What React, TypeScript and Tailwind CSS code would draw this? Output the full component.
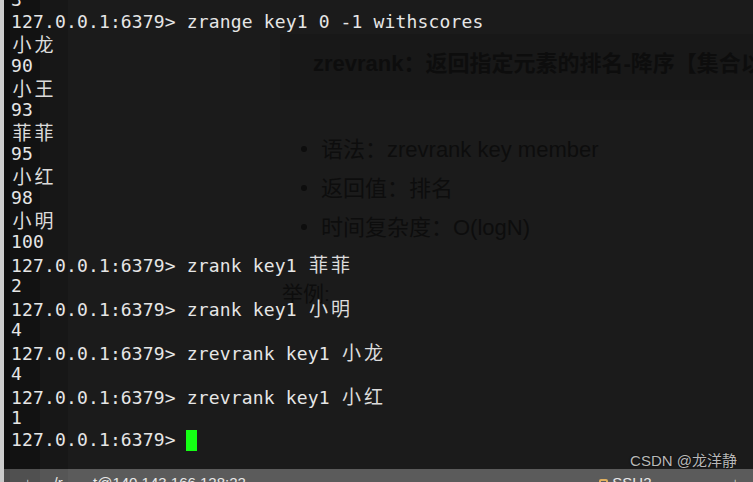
import React from "react";

type Seg = { t: string; cjk?: boolean };

const L = (...segs: (string | Seg)[]): Seg[] =>
  segs.map((s) => (typeof s === "string" ? { t: s } : s));
const C = (t: string): Seg => ({ t, cjk: true });

const P = "127.0.0.1:6379> ";

const lines: Seg[][] = [
  L("3"),
  L(P + "zrange key1 0 -1 withscores"),
  L(C("小龙")),
  L("90"),
  L(C("小王")),
  L("93"),
  L(C("菲菲")),
  L("95"),
  L(C("小红")),
  L("98"),
  L(C("小明")),
  L("100"),
  L(P + "zrank key1 ", C("菲菲")),
  L("2"),
  L(P + "zrank key1 ", C("小明")),
  L("4"),
  L(P + "zrevrank key1 ", C("小龙")),
  L("4"),
  L(P + "zrevrank key1 ", C("小红")),
  L("1"),
];

const mono = "font-['DejaVu_Sans_Mono',monospace]";
const ghost =
  "font-['Liberation_Sans','Noto_Sans_CJK_SC',sans-serif] text-[#0d0d0d]";

const Line: React.FC<{ segs: Seg[] }> = ({ segs }) => (
  <div className="h-[22px] leading-[22px] whitespace-pre">
    {segs.map((s, i) =>
      s.cjk ? (
        s.t.split("").map((ch, j) => (
          <span
            key={`${i}-${j}`}
            className="inline-block w-[22px] text-center font-['Noto_Sans_CJK_SC',sans-serif] text-[19px] text-[#dcdcdc]"
          >
            {ch}
          </span>
        ))
      ) : (
        <span key={i}>{s.t}</span>
      )
    )}
  </div>
);

const App: React.FC = () => {
  return (
    <div className="w-[753px] h-[482px] overflow-hidden flex bg-[#1b1b1b]">
      <div className="w-[4px] shrink-0 bg-[#c9c9c9]" />
      <div className="relative flex-1 flex flex-col">
        {/* faint columns of the window behind */}
        <div className="absolute inset-y-0 left-0 flex">
          <div className="w-[6px] bg-[#0d0d0d]" />
          <div className="w-[30px] bg-[#121212]" />
          <div className="w-[28px] bg-[#171717]" />
        </div>

        {/* document showing through */}
        <div className="absolute left-[276px] top-[34px] right-0 h-[66px] bg-[#181818]" />
        <div className={`absolute left-[309px] top-[47px] text-[22px] font-bold whitespace-nowrap ${ghost}`}>
          zrevrank：返回指定元素的排名-降序【集合以
        </div>
        <ul className={`absolute left-[297px] top-[135px] text-[22px] space-y-[11px] ${ghost}`}>
          {["语法：zrevrank key member", "返回值：排名", "时间复杂度：O(logN)"].map(
            (t) => (
              <li key={t} className="flex items-center h-[28px] whitespace-nowrap">
                <span className="w-[6px] h-[6px] rounded-full bg-[#0d0d0d] mr-[14px]" />
                {t}
              </li>
            )
          )}
        </ul>
        <div className={`absolute left-[278px] top-[278px] text-[21px] ${ghost}`}>
          举例:
        </div>

        {/* terminal */}
        <div
          className={`relative z-10 flex-1 pl-[7px] mt-[-11px] text-[18px] tracking-[0.15px] text-[#e6e6e6] ${mono}`}
        >
          {lines.map((l, i) => (
            <Line key={i} segs={l} />
          ))}
          <div className="h-[22px] leading-[22px] whitespace-pre flex items-center">
            <span>{P}</span>
            <span className="w-[11px] h-[21px] bg-[#14ff14] -ml-[1px]" />
          </div>
        </div>

        <div className="absolute z-20 right-[16px] bottom-[10px] text-[15px] text-[#b8b8b8] font-['Liberation_Sans','Noto_Sans_CJK_SC',sans-serif] [text-shadow:0_0_2px_#000]">
          CSDN @龙洋静
        </div>

        {/* status bar */}
        <div className="relative h-[13px] shrink-0 bg-[#5b5b5b] overflow-hidden">
          <div className="absolute inset-y-0 left-0 flex">
            <div className="w-[6px] bg-[#4a4a4a]" />
            <div className="w-[30px] bg-[#505050]" />
            <div className="w-[28px] bg-[#565656]" />
          </div>
          <div className="relative flex items-start pt-[5px] text-[15px] leading-[18px] text-[#e8e8e8] font-['Liberation_Sans',sans-serif]">
            <span className="ml-[20px]">↓</span>
            <span className="ml-[22px]">/r</span>
            <span className="ml-[22px]">..t@140.143.166.128:22</span>
            <span className="ml-auto flex items-center">
              <span className="w-[9px] h-[9px] rounded-[2px] border-2 border-[#e0b060] mr-[4px]" />
              SSH2
            </span>
            <span className="ml-[80px] mr-[14px]">↓</span>
          </div>
        </div>
      </div>
    </div>
  );
};

export default App;
